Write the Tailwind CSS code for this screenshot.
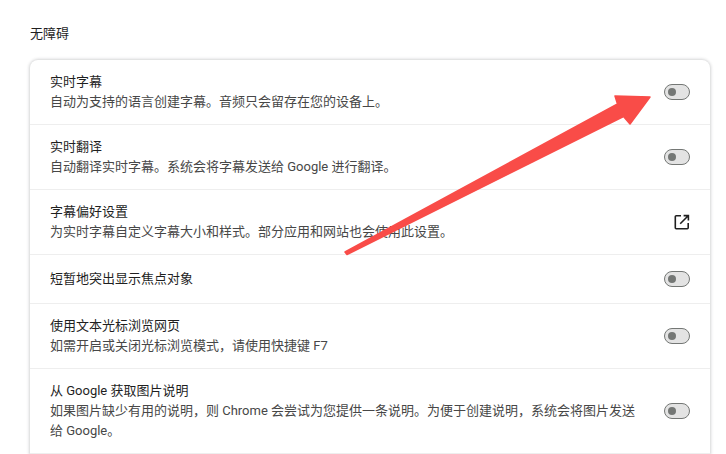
<!DOCTYPE html>
<html lang="zh-CN">
<head>
    <meta charset="UTF-8">
    <title>无障碍</title>
    <script src="https://cdn.jsdelivr.net/npm/@tailwindcss/browser@4"></script>
</head>
<body class="relative h-[454px] w-[726px] overflow-hidden bg-white font-['Roboto','Noto_Sans_CJK_SC',sans-serif] text-[13px] leading-[20px] text-[#1f1f1f]">

    <h2 class="pl-[30px] pt-[24px] pb-[16px] text-[13px] font-normal leading-[20px]">无障碍</h2>

    <!-- Card -->
    <div class="ml-[30px] w-[680px] rounded-t-lg bg-white shadow-[0_0_3px_1px_rgba(60,64,67,0.22)]">

        <div class="flex h-[65px] items-center justify-between border-b border-[#eeeeee] pl-[20px] pr-[20px]">
            <div>
                <p>实时字幕</p>
                <p class="text-[#474747]">自动为支持的语言创建字幕。音频只会留存在您的设备上。</p>
            </div>
            <span class="flex h-[16px] w-[26px] items-center rounded-full border border-[#747775] bg-[#e3e3e3] pl-[3px]"><span class="h-[8px] w-[8px] rounded-full bg-[#747775]"></span></span>
        </div>

        <div class="flex h-[65px] items-center justify-between border-b border-[#eeeeee] pl-[20px] pr-[20px]">
            <div>
                <p>实时翻译</p>
                <p class="text-[#474747]">自动翻译实时字幕。系统会将字幕发送给 Google 进行翻译。</p>
            </div>
            <span class="flex h-[16px] w-[26px] items-center rounded-full border border-[#747775] bg-[#e3e3e3] pl-[3px]"><span class="h-[8px] w-[8px] rounded-full bg-[#747775]"></span></span>
        </div>

        <div class="flex h-[65px] items-center justify-between border-b border-[#eeeeee] pl-[20px] pr-[20px]">
            <div>
                <p>字幕偏好设置</p>
                <p class="text-[#474747]">为实时字幕自定义字幕大小和样式。部分应用和网站也会使用此设置。</p>
            </div>
            <svg class="h-[16px] w-[16px]" viewBox="0 0 16 16" fill="none" stroke="#1f1f1f" stroke-width="1.6">
                <path d="M7 1.8H2.2a.9.9 0 0 0-.9.9v11.1a.9.9 0 0 0 .9.9h11.1a.9.9 0 0 0 .9-.9V9"/>
                <path d="M9.6 1.6h4.8v4.8M14.2 1.8 6.2 9.8"/>
            </svg>
        </div>

        <div class="flex h-[49px] items-center justify-between border-b border-[#eeeeee] pl-[20px] pr-[20px]">
            <p>短暂地突出显示焦点对象</p>
            <span class="flex h-[16px] w-[26px] items-center rounded-full border border-[#747775] bg-[#e3e3e3] pl-[3px]"><span class="h-[8px] w-[8px] rounded-full bg-[#747775]"></span></span>
        </div>

        <div class="flex h-[65px] items-center justify-between border-b border-[#eeeeee] pl-[20px] pr-[20px]">
            <div>
                <p>使用文本光标浏览网页</p>
                <p class="text-[#474747]">如需开启或关闭光标浏览模式，请使用快捷键 F7</p>
            </div>
            <span class="flex h-[16px] w-[26px] items-center rounded-full border border-[#747775] bg-[#e3e3e3] pl-[3px]"><span class="h-[8px] w-[8px] rounded-full bg-[#747775]"></span></span>
        </div>

        <div class="flex h-[85px] items-center justify-between border-b border-[#eeeeee] pl-[20px] pr-[20px]">
            <div class="w-[590px]">
                <p>从 Google 获取图片说明</p>
                <p class="text-[#474747]">如果图片缺少有用的说明，则 Chrome 会尝试为您提供一条说明。为便于创建说明，系统会将图片发送给 Google。</p>
            </div>
            <span class="flex h-[16px] w-[26px] items-center rounded-full border border-[#747775] bg-[#e3e3e3] pl-[3px]"><span class="h-[8px] w-[8px] rounded-full bg-[#747775]"></span></span>
        </div>
    </div>

    <!-- Red annotation arrow drawn over the screenshot -->
    <svg class="absolute left-0 top-0 h-[454px] w-[726px]" viewBox="0 0 726 454" fill="none">
        <path d="M345 252 L617.5 104 L615 96 L650 97 L630 124 L623.5 116.5 L347 254.5 Z" fill="#f94c48" stroke="#f94c48" stroke-width="1.5" stroke-linejoin="round"/>
    </svg>
</body>
</html>
